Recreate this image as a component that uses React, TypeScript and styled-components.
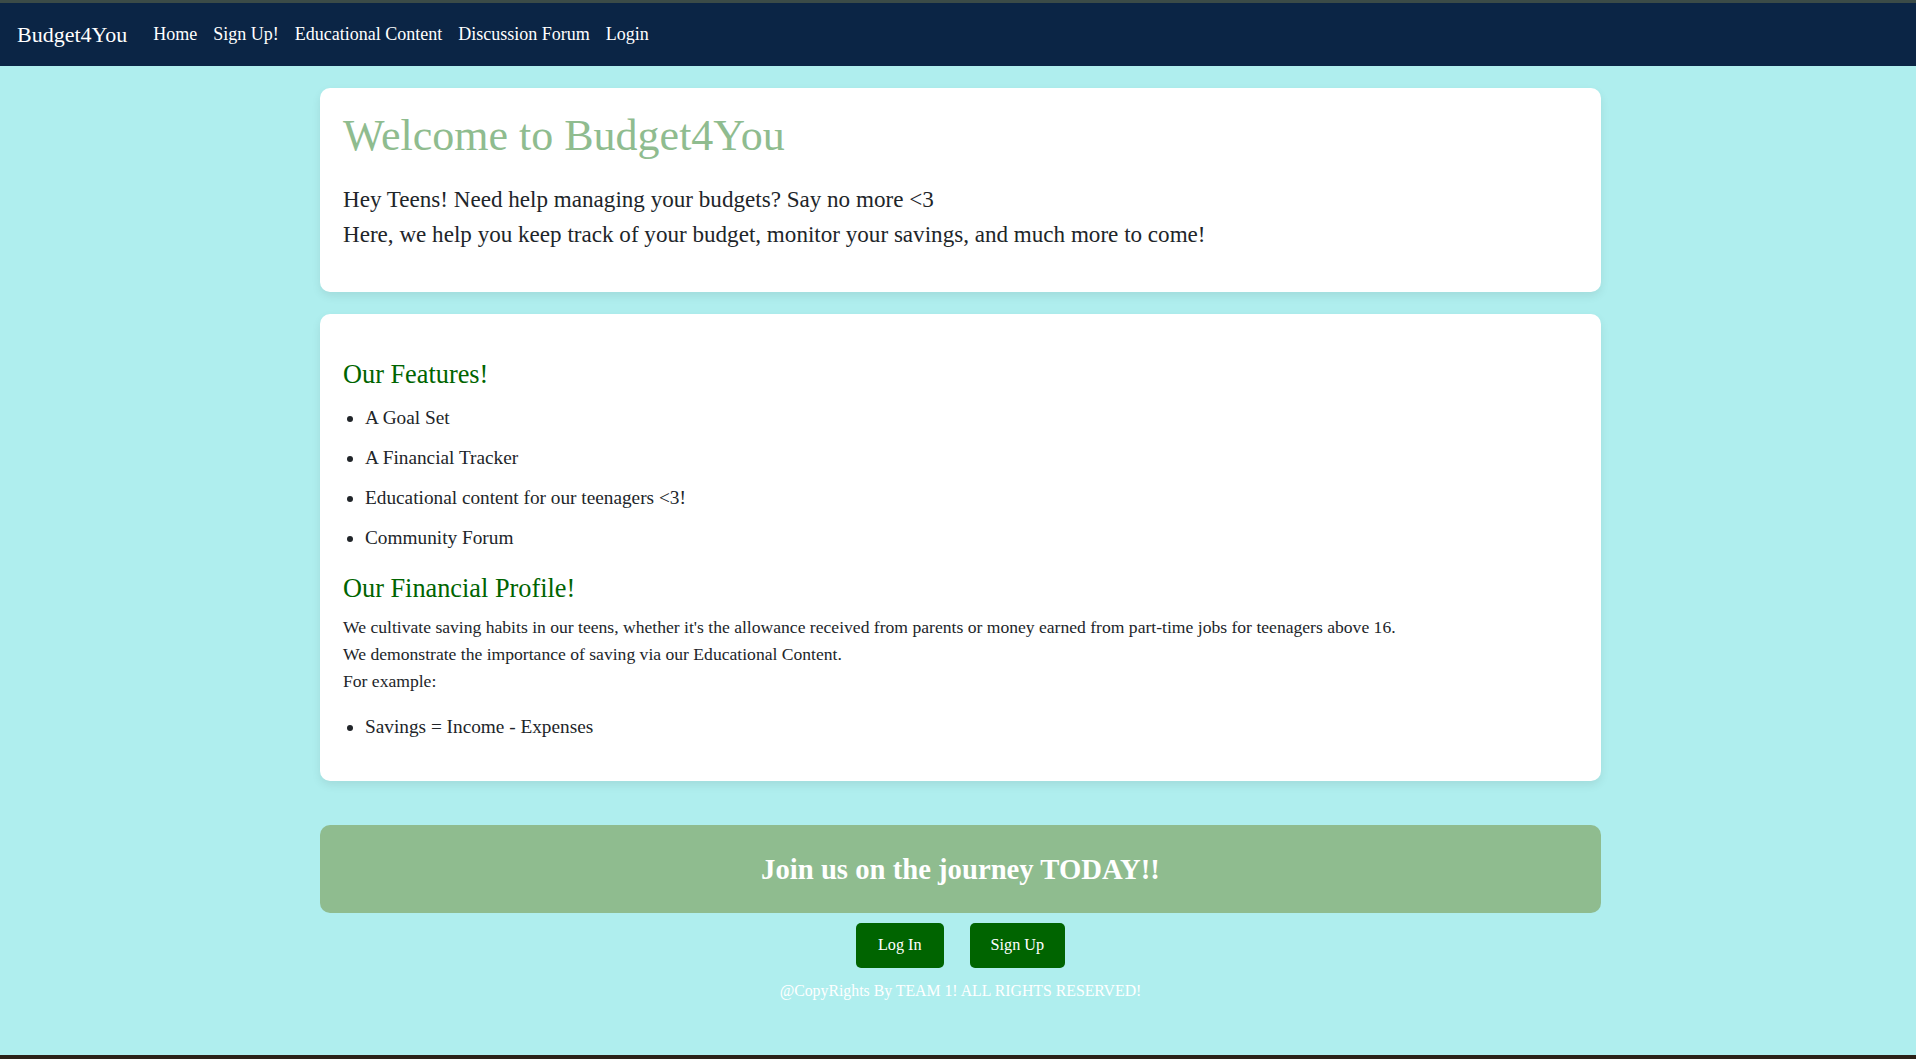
import React from 'react';
import styled, { createGlobalStyle } from 'styled-components';

const serif = `'Liberation Serif', 'Times New Roman', serif`;

const GlobalStyle = createGlobalStyle`
  html, body {
    margin: 0;
    padding: 0;
    background: #afeeee;
    font-family: ${serif};
    color: #212529;
  }
`;

const Page = styled.div`
  min-height: 100vh;
  display: flex;
  flex-direction: column;
`;

const NavBar = styled.nav`
  display: flex;
  align-items: center;
  height: 63px;
  padding: 0 17px;
  background: #0b2545;
  border-top: 3px solid #3b4b47;
`;

const Brand = styled.a`
  color: #fff;
  font-size: 22px;
  margin-right: 18px;
  text-decoration: none;
`;

const NavLink = styled.a`
  color: #fff;
  font-size: 18px;
  padding: 0 8px;
  text-decoration: none;
`;

const Main = styled.main`
  width: 1281px;
  margin: 22px 0 0 calc(50% - 638px);
  display: flex;
  flex-direction: column;
`;

const Card = styled.section`
  background: #fff;
  border-radius: 10px;
  padding: 24px 23px;
  margin-bottom: 22px;
  box-shadow: 0 4px 10px rgba(0, 0, 0, 0.08);
`;

const Title = styled.h1`
  margin: 0 0 22px;
  font-size: 44px;
  font-weight: normal;
  line-height: 48px;
  color: #8fbc8f;
`;

const Intro = styled.p`
  margin: 0 0 16px;
  font-size: 23.1px;
  line-height: 35px;
`;

const SectionTitle = styled.h3`
  margin: 21px 0 10px;
  font-size: 26.3px;
  font-weight: normal;
  line-height: 31px;
  color: #006400;
`;

const List = styled.ul`
  margin: 0 0 16px;
  padding: 4px 0 0 22px;
`;

const Item = styled.li`
  font-size: 19.3px;
  line-height: 28px;
  margin-bottom: 12px;
`;

const Text = styled.p`
  margin: 0 0 14px;
  font-size: 17.6px;
  line-height: 27px;
`;

const Banner = styled.div`
  margin-top: 22px;
  background: #8fbc8f;
  border-radius: 10px;
  padding: 27px 20px;
  text-align: center;
`;

const BannerText = styled.h2`
  margin: 0;
  color: #fff;
  font-size: 28.7px;
  font-weight: bold;
  line-height: 34px;
`;

const ButtonRow = styled.div`
  display: flex;
  justify-content: center;
  gap: 26px;
  margin-top: 10px;
`;

const ActionButton = styled.button<{ $px?: number }>`
  background: #006400;
  color: #fff;
  border: none;
  border-radius: 5px;
  height: 45px;
  padding: 0 ${p => p.$px || 21}px;
  font-family: ${serif};
  font-size: 16.2px;
  cursor: pointer;
`;

const Copyright = styled.p`
  margin: 13px 0 0;
  text-align: center;
  color: #fff;
  font-size: 15.8px;
  line-height: 20px;
`;

const BottomEdge = styled.div`
  margin-top: auto;
  height: 4px;
  background: #2b2118;
`;

const navItems = ['Home', 'Sign Up!', 'Educational Content', 'Discussion Forum', 'Login'];

const features = [
  'A Goal Set',
  'A Financial Tracker',
  'Educational content for our teenagers <3!',
  'Community Forum',
];

export default function App() {
  return (
    <Page>
      <GlobalStyle />
      <NavBar>
        <Brand href="#">Budget4You</Brand>
        {navItems.map(item => (
          <NavLink key={item} href="#">
            {item}
          </NavLink>
        ))}
      </NavBar>
      <Main>
        <Card>
          <Title>Welcome to Budget4You</Title>
          <Intro>
            Hey Teens! Need help managing your budgets? Say no more &lt;3
            <br />
            Here, we help you keep track of your budget, monitor your savings, and much more to come!
          </Intro>
        </Card>
        <Card>
          <SectionTitle>Our Features!</SectionTitle>
          <List>
            {features.map(f => (
              <Item key={f}>{f}</Item>
            ))}
          </List>
          <SectionTitle>Our Financial Profile!</SectionTitle>
          <Text>
            We cultivate saving habits in our teens, whether it's the allowance received from parents or money earned
            from part-time jobs for teenagers above 16.
            <br />
            We demonstrate the importance of saving via our Educational Content.
            <br />
            For example:
          </Text>
          <List>
            <Item>Savings = Income - Expenses</Item>
          </List>
        </Card>
        <Banner>
          <BannerText>Join us on the journey TODAY!!</BannerText>
        </Banner>
        <ButtonRow>
          <ActionButton $px={22}>Log In</ActionButton>
          <ActionButton>Sign Up</ActionButton>
        </ButtonRow>
        <Copyright>@CopyRights By TEAM 1! ALL RIGHTS RESERVED!</Copyright>
      </Main>
      <BottomEdge />
    </Page>
  );
}
